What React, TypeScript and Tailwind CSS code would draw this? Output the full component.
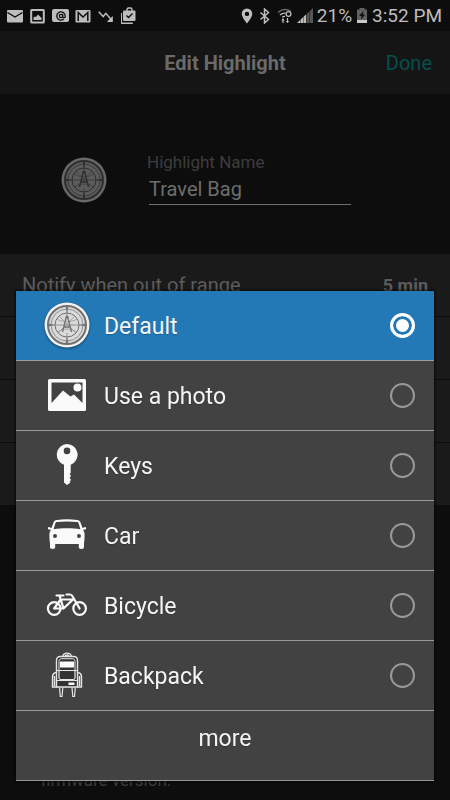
import React, { useState } from 'react';
import { AtSign } from 'lucide-react';

type IconOption = {
  id: string;
  label: string;
  icon: React.ReactNode;
};

const CompassBadge: React.FC<{ dimmed?: boolean }> = ({ dimmed = false }) => {
  const rim = dimmed ? '#686868' : '#f1f1f1';
  const face = dimmed ? '#5c5c5c' : '#dadada';
  const line = dimmed ? '#2e2e2e' : '#727272';

  return (
    <svg
      viewBox="0 0 46 46"
      className={dimmed ? 'size-[46px] shrink-0' : 'size-[46px] shrink-0 drop-shadow-[0_1px_1px_rgba(0,0,0,0.5)]'}
      fill="none"
      aria-hidden="true"
    >
      <circle cx="23" cy="23" r="22.5" fill={rim} />
      <circle cx="23" cy="23" r="19" fill={face} stroke={line} strokeWidth="2" />
      <circle cx="23" cy="23" r="16" stroke={line} strokeWidth="0.7" />
      <circle cx="23" cy="23" r="12" stroke={line} strokeWidth="1" />
      <path d="M5 23h36M23 5v10M23 31v10" stroke={line} strokeWidth="0.7" />
      <path d="M5 21.800l6 1.200-6 1.200zM41 21.800l-6 1.200 6 1.200zM21.800 5L23 11.500 24.200 5zM21.800 41l1.200-6.500 1.200 6.500z" fill={line} />
      <path d="M13 17c5 3.500 15 3.500 20 0M14 30c4-4 14-4 18 0M15 14l17 17M31 14L14 31" stroke={line} strokeWidth="0.5" />
      <path d="M22.300 15L18.500 30M23.700 15L27.500 30M20.300 25h5.400" stroke={line} strokeWidth="1.300" />
      <circle cx="23" cy="15" r="1.500" fill={line} />
    </svg>
  );
};

const PhotoIcon = () => (
  <svg viewBox="0 0 38 32" className="h-8 w-[38px]" aria-hidden="true">
    <path
      fill="#fafafa"
      fillRule="evenodd"
      d="M1.500 0h35A1.500 1.500 0 0 1 38 1.500v29a1.500 1.500 0 0 1-1.500 1.500h-35A1.500 1.500 0 0 1 0 30.500v-29A1.500 1.500 0 0 1 1.500 0zM3.500 3.500v20.500L15 11.500l7.500 6 3.500-2 8.500 8.500V3.500z"
    />
    <circle cx="29.500" cy="8.500" r="4" fill="#fafafa" />
  </svg>
);

const KeyIcon = () => (
  <svg viewBox="0 0 22 42" className="h-[42px] w-[22px]" aria-hidden="true">
    <path
      fill="#fafafa"
      fillRule="evenodd"
      d="M11 0a10.700 10.700 0 0 1 3.700 20.700v8.300l-1.200 1 1.200 1.300v1.200l-1.200 1.200 1.200 1.300v1.500l-1 1 .8 1L11 41l-3-2.500V20.800A10.700 10.700 0 0 1 11 0zm0 3.600a3.300 3.300 0 1 0 0 6.600 3.300 3.300 0 0 0 0-6.600z"
    />
  </svg>
);

const CarIcon = () => (
  <svg viewBox="0 0 38 32" className="h-8 w-[38px]" aria-hidden="true">
    <path
      fill="#fafafa"
      fillRule="evenodd"
      d="M9 .9C15 .1 23 .1 29 .9c2 .3 3 1 3.500 2.600l2 5.500 2.700-1c1-.2 1.300 2 .3 2.400l-2.600.4c1.300 1.500 1.700 3 1.700 5.200 0 3-.2 6-.6 8.200V28c0 1.300-.8 2-2.600 2s-2.600-.7-2.600-2v-3H7.200v3c0 1.300-.8 2-2.600 2S2 29.300 2 28v-3.800C1.600 22 1.400 19 1.400 16c0-2.200.4-3.700 1.700-5.200L.5 10.400C-.5 10-.2 7.800.8 8l2.700 1 2-5.500C6 1.900 7 1.200 9 .9zM9 2.900c-.8.100-1.200.4-1.500 1.200L5.600 10.200c8-1.200 18.800-1.200 26.800 0l-1.900-6.100c-.3-.8-.7-1.100-1.500-1.200-6-.7-14-.7-20 0zM7 15a2 2 0 1 0 0 4 2 2 0 0 0 0-4zm24 0a2 2 0 1 0 0 4 2 2 0 0 0 0-4z"
    />
  </svg>
);

const BicycleIcon = () => (
  <svg
    viewBox="0 0 42 24"
    className="h-6 w-[42px]"
    fill="none"
    stroke="#fafafa"
    strokeWidth="2.200"
    strokeLinecap="round"
    strokeLinejoin="round"
    aria-hidden="true"
  >
    <circle cx="8.200" cy="15.500" r="6.300" />
    <circle cx="33.600" cy="15.500" r="6.300" />
    <path d="M8.200 15.500L14.500 6.500H27M8.200 15.500h9.300L27 6.500M17.500 15.500L13.500 2.500M10.500 2.500h7M20.500 1.500H24c1.500 0 2 .8 2.600 2L33.600 15.500" />
  </svg>
);

const BackpackIcon = () => (
  <svg viewBox="0 0 34 46" className="h-[46px] w-[34px]" fill="none" stroke="#e6e6e6" strokeWidth="1.400" aria-hidden="true">
    <path d="M12.800 4.500c.5-4.500 8-4.500 8.500 0M15 4.500c.5-2 3.500-2 4 0" />
    <path d="M6.500 35V8.500c0-3 1.500-4 4-4h13c2.500 0 4 1 4 4V35z" fill="#333333" />
    <path d="M9 19V9.500c0-2 1-2.800 2.800-2.800h10.500c1.700 0 2.700.8 2.700 2.800V19" strokeWidth="1" />
    <rect x="10" y="9.500" width="14" height="6" fill="#fafafa" stroke="none" />
    <path d="M6.500 18.500h21M9 19v7c0 1 .8 1.500 2 1.500h12c1.200 0 2-.5 2-1.500v-7M6.500 28.500h21" strokeWidth="1.200" />
    <path d="M6.500 20.500c-3 .2-4 1.500-4 4.500v10h4M27.500 20.500c3 .2 4 1.500 4 4.500v10h-4M4.500 24v10M29.500 24v10" />
    <rect x="18.500" y="30.500" width="6" height="2.500" fill="#fafafa" stroke="none" />
    <path d="M9.500 35.500l.8 9h1.700l.8-9M22 35.500l.8 9h1.700l.8-9" strokeWidth="1.200" />
  </svg>
);

const options: IconOption[] = [
  { id: 'default', label: 'Default', icon: <CompassBadge /> },
  { id: 'photo', label: 'Use a photo', icon: <PhotoIcon /> },
  { id: 'keys', label: 'Keys', icon: <KeyIcon /> },
  { id: 'car', label: 'Car', icon: <CarIcon /> },
  { id: 'bicycle', label: 'Bicycle', icon: <BicycleIcon /> },
  { id: 'backpack', label: 'Backpack', icon: <BackpackIcon /> },
];

const NotificationIcons = () => (
  <div className="flex items-center gap-1.5">
    <svg viewBox="0 0 17 16" className="h-4 w-[17px]" aria-hidden="true">
      <rect x="1" y="2" width="16" height="12.500" rx="1" fill="#bdbdbd" />
      <path d="M1.500 4.500L9 9l7.500-4.500" stroke="#0d0d0d" strokeWidth="1.400" fill="none" />
    </svg>
    <svg viewBox="0 0 17 16" className="h-4 w-[17px]" aria-hidden="true">
      <rect x="2.200" y="2" width="12.600" height="12.500" rx="0.500" stroke="#bdbdbd" strokeWidth="2" fill="none" />
      <path d="M4.500 12V9.500l1.500-1 1 .5 2-2.500 1.500 1.500 2 2V12z" fill="#bdbdbd" />
    </svg>
    <span className="flex h-[13px] w-[17px] items-center justify-center rounded-xs bg-[#bdbdbd]">
      <AtSign className="size-[10px] text-[#0d0d0d]" strokeWidth={3} aria-hidden="true" />
    </span>
    <svg viewBox="0 0 17 16" className="h-4 w-[17px]" aria-hidden="true">
      <rect x="0.500" y="2" width="15" height="12.500" rx="1" fill="#bdbdbd" />
      <path d="M3.200 13V4.500L8 9l4.800-4.500V13" stroke="#0d0d0d" strokeWidth="1.500" fill="none" />
    </svg>
    <svg viewBox="0 0 17 16" className="h-4 w-[17px]" aria-hidden="true">
      <path d="M.7 3.800l4.500 4.700 2.600-3.200 5.200 6" stroke="#bdbdbd" strokeWidth="1.500" fill="none" />
      <path d="M14.800 8v6H8.800z" fill="#bdbdbd" />
    </svg>
    <svg viewBox="0 0 17 18" className="h-[18px] w-[17px]" fill="none" aria-hidden="true">
      <path d="M.3 6v10.200h11.500" stroke="#bdbdbd" strokeWidth="1.500" />
      <path d="M6 4V2.500C6 1.500 6.500 1 7.500 1h2c1 0 1.500.5 1.500 1.500V4" stroke="#bdbdbd" strokeWidth="1.400" />
      <rect x="2" y="3.500" width="12.500" height="10.500" rx="1" fill="#bdbdbd" />
      <path d="M5.500 8.500l2 2 4-4" stroke="#0d0d0d" strokeWidth="1.400" />
    </svg>
  </div>
);

const StatusBar = () => (
  <div className="flex h-[31px] items-center justify-between bg-[#0d0d0d] pr-2 pl-1.5 text-[19px] leading-6 text-[#bdbdbd]">
    <NotificationIcons />
    <div className="flex items-center">
      <svg viewBox="0 0 12 16" className="mr-1.5 h-4 w-3" aria-hidden="true">
        <path
          fill="#bdbdbd"
          fillRule="evenodd"
          d="M6 .5a5.300 5.300 0 0 1 5.300 5.300C11.300 9.500 6 15.500 6 15.500S.7 9.500.7 5.800A5.300 5.300 0 0 1 6 .5zm0 3.200a2.200 2.200 0 1 0 0 4.400 2.200 2.200 0 0 0 0-4.400z"
        />
      </svg>
      <svg viewBox="0 0 12 16" className="mr-1.5 h-4 w-3" fill="none" aria-hidden="true">
        <path d="M1.500 4.500l8 7-4 3.500V1l4 3.500-8 7" stroke="#bdbdbd" strokeWidth="1.500" />
      </svg>
      <svg viewBox="0 0 16 16" className="mr-1 h-4 w-4" fill="none" stroke="#bdbdbd" aria-hidden="true">
        <path d="M1 4.500C4.500.8 10.500.8 14 3.500" stroke="#6a6a6a" strokeWidth="1.500" />
        <path d="M3 7c2-1.700 3.700-2.200 5.500-1.700M5.200 9.300c.8-.7 1.600-1 2.800-.9" strokeWidth="1.400" />
        <circle cx="11.500" cy="6" r="2.400" strokeWidth="1.300" />
        <path d="M6 10.500v4.500M10.500 10v4.500" strokeWidth="1.200" />
        <path d="M4.300 12.500L6 10.500l1.700 2zM8.800 13l1.700 2 1.700-2z" fill="#bdbdbd" stroke="none" />
      </svg>
      <svg viewBox="0 0 16 16" className="mr-1 h-4 w-4" aria-hidden="true">
        <path d="M16 0v15H0z" fill="#555" />
        <path d="M9 6.600V15H0z" fill="#bdbdbd" />
        <path d="M3.500 11v4M6.500 8v7M9.500 5v10M12.500 3v12" stroke="#0d0d0d" strokeWidth="0.400" />
      </svg>
      <span>21%</span>
      <svg viewBox="0 0 12 15" className="mx-1 h-[15px] w-3" aria-hidden="true">
        <path d="M3.500 0h5v1.500H11V15H1V1.500h2.500z" fill="#616161" />
        <path d="M1 12h10v3H1z" fill="#c8c8c8" />
        <path d="M7.500 3L3 8h2.500L5 11.500 9.200 6.500H6.700z" fill="#0d0d0d" />
      </svg>
      <span>3:52 PM</span>
    </div>
  </div>
);

const App: React.FC = () => {
  const [name, setName] = useState('Travel Bag');
  const [selected, setSelected] = useState('default');

  return (
    <main className="flex min-h-screen flex-col bg-[#0d0d0d] font-[Roboto,sans-serif]">
      <StatusBar />

      <header className="grid h-[63px] grid-cols-3 items-center bg-[#151515] px-[18px]">
        <h1 className="col-start-2 text-center text-[20px] font-bold whitespace-nowrap text-[#6a6a6a]">Edit Highlight</h1>
        <button type="button" className="justify-self-end text-[20px] text-[#064f4f]">
          Done
        </button>
      </header>

      <section className="flex items-center gap-10 pt-14 pr-[99px] pb-[49px] pl-[61px]">
        <div className="mt-1">
          <CompassBadge dimmed />
        </div>
        <div className="flex min-w-0 flex-1 flex-col">
          <label htmlFor="highlight-name" className="text-[17px] leading-6 text-[#3d3d3d]">
            Highlight Name
          </label>
          <input
            id="highlight-name"
            type="text"
            value={name}
            onChange={(e) => setName(e.target.value)}
            className="ml-0.5 h-[31px] border-b border-[#6e6e6e] bg-transparent text-[20px] text-[#6e6e6e] outline-none"
          />
        </div>
      </section>

      <section className="divide-y divide-[#0b0b0b] bg-[#1a1a1a]">
        <div className="flex h-[63px] items-center justify-between px-[22px] text-[#5c5c5c]">
          <span className="text-[20px]">Notify when out of range</span>
          <span className="text-[18px] font-bold">5 min</span>
        </div>
        <div className="h-[63px]" />
        <div className="h-[63px]" />
        <div className="h-[62px]" />
      </section>

      <footer className="mt-auto px-[41px] pb-2 text-[17px] leading-6 text-[#3d3d3d]">firmware version.</footer>

      {/* icon picker */}
      <div className="fixed inset-0 flex items-end px-4 pb-[19px]">
        <div role="dialog" aria-label="Choose an icon" className="w-full bg-[#424242] text-[23px] text-[#f5f5f5] shadow-[0_0_2px_1px_rgba(0,0,0,0.7)]">
          {options.map((option) => (
            <label
              key={option.id}
              htmlFor={option.id}
              className={
                selected === option.id
                  ? 'flex h-[70px] items-center gap-[13px] border-b border-[#a39f99] bg-[#2378b6] pr-[19px] pl-[27px]'
                  : 'flex h-[70px] items-center gap-[13px] border-b border-[#999999] pr-[19px] pl-[27px]'
              }
            >
              <span className="flex w-12 shrink-0 items-center justify-center pb-0.5">{option.icon}</span>
              <span className="flex-1 pt-1 text-shadow-xs">{option.label}</span>
              <input
                id={option.id}
                type="radio"
                name="icon"
                checked={selected === option.id}
                onChange={() => setSelected(option.id)}
                className="size-[25px] appearance-none rounded-full border-2 border-[#999999] checked:border-3 checked:border-white checked:bg-white checked:shadow-[inset_0_0_0_3px_#2378b6]"
              />
            </label>
          ))}
          <button type="button" className="block h-[70px] w-full border-b border-[#999999] pb-3 text-shadow-xs">
            more
          </button>
        </div>
      </div>
    </main>
  );
};

export default App;
